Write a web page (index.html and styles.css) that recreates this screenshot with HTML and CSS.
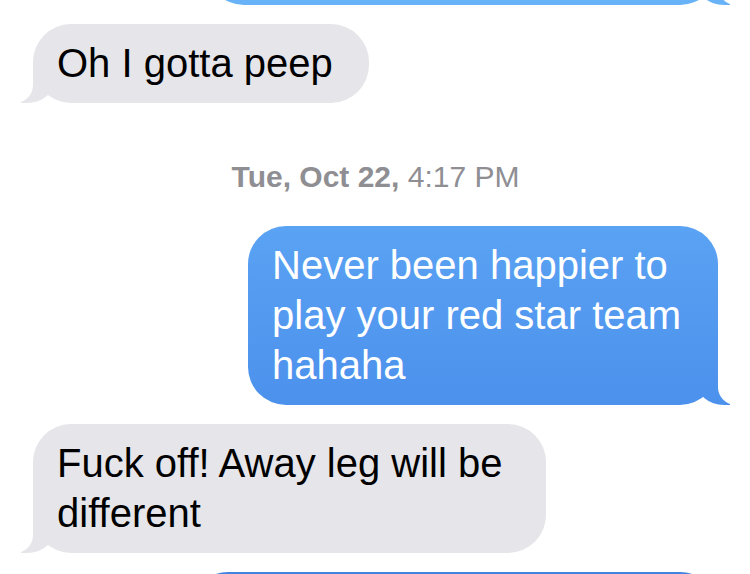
FILE: index.html
```html
<!DOCTYPE html>
<html lang="en">
<head>
    <meta charset="UTF-8">
    <meta name="viewport" content="width=device-width, initial-scale=1.0">
    <title>Messages</title>
    <link rel="stylesheet" href="styles.css">
</head>
<body>
    <div class="thread">
        <div class="bubble me cut-top"></div>

        <div class="bubble them">Oh I gotta peep</div>

        <div class="timestamp"><strong>Tue, Oct 22,</strong> 4:17 PM</div>

        <div class="bubble me reply-1">Never been happier to play your red star team hahaha</div>

        <div class="bubble them reply-2">Fuck off! Away leg will be different</div>

        <div class="bubble me cut-bottom"></div>
    </div>
</body>
</html>
```

FILE: styles.css
```css
body {
    margin: 0;
    background: #fff;
    font-family: "Liberation Sans", Arial, sans-serif;
}

.thread {
    display: flex;
    flex-direction: column;
    gap: 19px;
    height: 100vh;
    overflow: hidden;
    padding: 0 32px 0 33px;
}

.bubble {
    position: relative;
    flex-shrink: 0;
    box-sizing: border-box;
    max-width: 520px;
    padding: 14px 36px 15px 24px;
    border-radius: 38px;
    font-size: 40px;
    line-height: 50px;
}

/* wrapped bubbles hug their longest line */
.reply-1 { max-width: 470px; }
.reply-2 { max-width: 513px; }

/* outgoing - blue, gradient fixed to the screen like iMessage */
.bubble.me {
    align-self: flex-end;
    color: #fff;
    background: linear-gradient(#68b3f8 0%, #5aa2f3 40%, #4b90ec 72%, #4183df 100%) fixed;
}

.bubble.me::before {
    content: "";
    position: absolute;
    bottom: 0;
    right: -12px;
    width: 34px;
    height: 38px;
    background: linear-gradient(#68b3f8 0%, #5aa2f3 40%, #4b90ec 72%, #4183df 100%) fixed;
    border-bottom-left-radius: 28px 24px;
}

.bubble.me::after {
    content: "";
    position: absolute;
    bottom: 0;
    right: -40px;
    width: 40px;
    height: 40px;
    background: #fff;
    border-bottom-left-radius: 18px;
}

/* incoming - grey */
.bubble.them {
    align-self: flex-start;
    color: #000;
    background: #e5e5ea;
}

.bubble.them::before {
    content: "";
    position: absolute;
    bottom: 0;
    left: -12px;
    width: 34px;
    height: 38px;
    background: #e5e5ea;
    border-bottom-right-radius: 28px 24px;
}

.bubble.them::after {
    content: "";
    position: absolute;
    bottom: 0;
    left: -40px;
    width: 40px;
    height: 40px;
    background: #fff;
    border-bottom-right-radius: 18px;
}

/* messages scrolled off the edges */
.cut-top {
    width: 512px;
    max-width: none;
    height: 120px;
    margin-top: -115px;
}

.cut-bottom {
    width: 528px;
    max-width: none;
    height: 120px;
}

.timestamp {
    flex-shrink: 0;
    margin: 37px 0 12px;
    text-align: center;
    font-size: 30px;
    line-height: 36px;
    color: #8e8e93;
}

.timestamp strong {
    font-weight: 700;
}
```
